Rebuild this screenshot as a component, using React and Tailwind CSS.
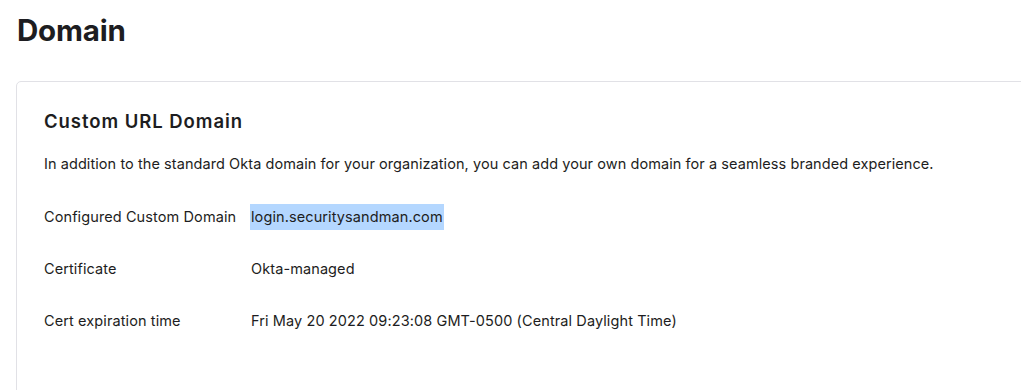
export default function App() {
  const rows = [
    { label: 'Configured Custom Domain', value: 'login.securitysandman.com', selected: true },
    { label: 'Certificate', value: 'Okta-managed' },
    { label: 'Cert expiration time', value: 'Fri May 20 2022 09:23:08 GMT-0500 (Central Daylight Time)' },
  ];

  return (
    <div className="h-[390px] w-[1021px] overflow-hidden bg-white text-[#1d1d21] font-['Inter',sans-serif]">
      <h1 className="pl-[17px] pt-[10px] text-[29.5px] font-bold leading-[40px] tracking-[-0.2px]">Domain</h1>
      <div className="ml-4 mt-[31px] w-[1100px] h-[400px] rounded-tl-[5px] border border-[#e1e1e6] px-[27px] pt-[27px]">
        <h2 className="text-[18.5px] font-semibold leading-[24px] tracking-[0.95px]">Custom URL Domain</h2>
        <p className="mt-[21px] text-[14.5px] leading-[20px] tracking-[0.07px]">
          In addition to the standard Okta domain for your organization, you can add your own domain for a seamless branded experience.
        </p>
        <div className="mt-[30px] flex flex-col gap-[26px]">
          {rows.map(r => (
            <div key={r.label} className="flex items-center text-[14.5px] leading-[20px] tracking-[0.1px]">
              <div className="w-[206px] shrink-0">{r.label}</div>
              <div className={r.selected ? 'bg-[#b4d7ff] px-[1px] py-[3px]' : 'px-[1px] py-[3px]'}>{r.value}</div>
            </div>
          ))}
        </div>
      </div>
    </div>
  );
}
